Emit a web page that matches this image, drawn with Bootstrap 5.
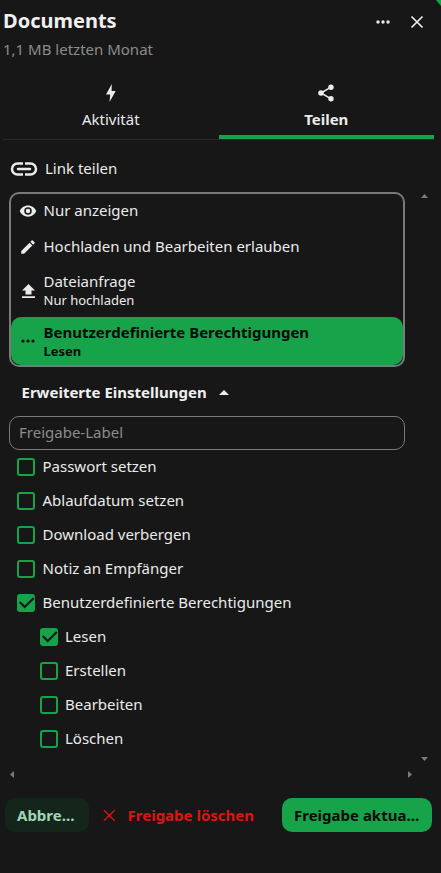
<!DOCTYPE html>
<html lang="de"><head><meta charset="utf-8">
<title>Documents</title>
<link rel="stylesheet" href="https://cdn.jsdelivr.net/npm/bootstrap@5.3.0/dist/css/bootstrap.min.css">
<style>
html,body{height:100%}
body{background:#171717;color:#ebebeb;font-family:"Noto Sans",sans-serif;font-size:15px;line-height:20px;position:relative;overflow:hidden}
.panel{width:441px;height:873px}
.topbar{height:38px;padding:3px 7px 0 3px}
.doc-title{font-size:20px;font-weight:700;line-height:30px;margin:0;color:#f0f0f0}
.top-btn{width:34px;height:34px;background:none;border:0;padding:0;color:#ebebeb}
.subline{font-size:15px;color:#8c8c8c;line-height:20px;padding:1px 3px 0;margin-top:0;height:21px}
.tabrow{margin:16px 7px 0 3px;height:65px;border-bottom:1px solid #292929}
.tabcell{flex:1 1 0;height:64px;text-align:center;padding-top:9px;color:#ebebeb}
.tabcell.on{font-weight:700;border-bottom:4px solid #16a34a}
.tabcell svg{display:block;margin:0 auto 7px}
.tabcell span{line-height:20px;display:block}
.linkline{height:52px;padding:6px 0 0 10px;gap:7px}
.lift{padding-bottom:2px}
.scrollwrap{height:576px}
.mainpane{width:414px;padding-left:9px}
.vbar{width:27px;padding:2px 0 1px 7px;height:570px}
.optbox{width:396px;height:175px;border:2px solid #7a7a7a;border-radius:10px;background:#171717;overflow:hidden}
.optrow{padding:0 8px;gap:6.5px;height:36px}
.optrow.first{height:35px}
.optrow.first .lift{padding-bottom:4px}
.optrow.first svg{margin-bottom:1px}
.optrow.two{height:52px;align-items:center}
.optrow.sel{background:#16a34a;color:#0a0a0a;font-weight:700;border-radius:10px;height:48px}
.opttext small{display:block;font-size:13px;line-height:18px}
.opttext{line-height:19px}
.iconcell{width:18px;flex:none;display:flex;justify-content:center}
.advhead{height:49px;padding:1px 0 0 12.500px;font-weight:700;gap:12px;color:#f0f0f0}
.labelinput{width:396px;height:34px;background:#171717;border:1px solid #7a7a7a;border-radius:10px;color:#ebebeb;padding:0 9px 2px;font-size:15px;display:block}
.labelinput::placeholder{color:#8c8c8c;opacity:1}
.labelinput:focus{background:#171717;color:#ebebeb;border-color:#7a7a7a;box-shadow:none}
.chk{height:34px;padding-left:8px;gap:7.500px;margin:0}
.chk.sub{padding-left:31px;gap:7px}
.boxmark{width:18px;height:18px;border:2px solid #16a34a;border-radius:3px;flex:none;display:flex;align-items:center;justify-content:center}
.boxmark.ticked{background:#16a34a}
.boxmark svg{margin:-2px;flex:none}
.hbar{padding:0 0 0 10px;width:412px;height:12px}
.footrow{padding:0 9px 0 5px;margin-top:18px;height:34px}
.btn-cancel,.btn-save,.btn-del{height:34px;border-radius:10px;font-size:15px;font-weight:700;border:0;padding:0;line-height:34px;white-space:nowrap;text-align:left}
.btn-cancel{width:84px;background:#14261b;color:#a2d5b5;padding-left:12px}
.btn-del{width:165px;background:none;color:#dc1414;padding-left:14px;gap:12px}
.btn-save{width:150px;background:#16a34a;color:#0a0a0a;margin-left:28px;padding-left:12px}
.btn-cancel:hover,.btn-cancel:active{background:#14261b;color:#a2d5b5}
.btn-save:hover{background:#16a34a;color:#0a0a0a}
.btn-del:hover{color:#dc1414}
.cornertick{position:absolute;right:0;top:0;width:5px;height:6px}
</style></head>
<body>
<svg class="cornertick" viewBox="0 0 5 6"><path d="M0 0h5v6z" fill="#16a34a"/></svg>
<div class="panel d-flex flex-column">
  <div class="topbar d-flex align-items-center justify-content-between">
    <h1 class="doc-title">Documents</h1>
    <div class="d-flex">
      <button class="top-btn" aria-label="Mehr"><svg width="14" height="4" viewBox="0 0 14 4"><circle cx="2" cy="2" r="1.700" fill="#ebebeb"/><circle cx="7" cy="2" r="1.700" fill="#ebebeb"/><circle cx="12" cy="2" r="1.700" fill="#ebebeb"/></svg></button>
      <button class="top-btn" aria-label="Schließen"><svg width="14" height="14" viewBox="0 0 14 14"><path d="M1.500 1.500l11 11M12.500 1.500l-11 11" stroke="#ebebeb" stroke-width="1.700" fill="none"/></svg></button>
    </div>
  </div>
  <div class="subline">1,1 MB letzten Monat</div>
  <div class="tabrow d-flex">
    <div class="tabcell"><svg width="10" height="18" viewBox="0 0 10 18"><path d="M5.800 0L0 10.600h4.200L3.500 18 9.700 7H5.600z" fill="#ebebeb"/></svg><span>Aktivität</span></div>
    <div class="tabcell on"><svg width="17" height="18" viewBox="0 0 17 18"><path d="M13 3.200L3 9l10 5.800" stroke="#ebebeb" stroke-width="1.500" fill="none"/><circle cx="13" cy="3.200" r="2.700" fill="#ebebeb"/><circle cx="3" cy="9" r="2.800" fill="#ebebeb"/><circle cx="13" cy="14.800" r="2.700" fill="#ebebeb"/></svg><span>Teilen</span></div>
  </div>
  <div class="linkline d-flex align-items-center"><svg width="28" height="14" viewBox="0 0 28 14"><path d="M13 1.500H7.500a5.500 5.500 0 0 0 0 11H13M15 1.500h5.500a5.500 5.500 0 0 1 0 11H15" stroke="#ebebeb" stroke-width="2.500" fill="none"/><path d="M8 7h12" stroke="#ebebeb" stroke-width="2.500" stroke-linecap="round"/></svg><span class="lift">Link teilen</span></div>
  <div class="d-flex scrollwrap">
    <div class="mainpane">
      <div class="optbox d-flex flex-column">
        <div class="optrow first d-flex align-items-center"><span class="iconcell"><svg width="20" height="20" viewBox="0 0 24 24"><path d="M12 4.500C7 4.500 2.700 7.600 1 12c1.700 4.400 6 7.500 11 7.500s9.300-3.100 11-7.500c-1.700-4.400-6-7.500-11-7.500zM12 17a5 5 0 1 1 0-10 5 5 0 0 1 0 10zm0-8a3 3 0 1 0 0 6 3 3 0 0 0 0-6z" fill="#ebebeb"/></svg></span><span class="lift">Nur anzeigen</span></div>
        <div class="optrow d-flex align-items-center"><span class="iconcell"><svg width="20" height="20" viewBox="0 0 24 24"><path d="M3 17.250V21h3.750L17.810 9.940l-3.750-3.750zM20.710 7.040a1 1 0 0 0 0-1.410l-2.340-2.340a1 1 0 0 0-1.410 0l-1.830 1.830 3.750 3.750z" fill="#ebebeb"/></svg></span><span class="lift">Hochladen und Bearbeiten erlauben</span></div>
        <div class="optrow two d-flex"><span class="iconcell"><svg width="13" height="14" viewBox="0 0 13 14"><path d="M6.500 0L13 6.500H9.500v4h-6v-4H0zM0 12.200h13V14H0z" fill="#ebebeb"/></svg></span><span class="opttext lift">Dateianfrage<small>Nur hochladen</small></span></div>
        <div class="optrow sel d-flex align-items-center"><span class="iconcell"><svg width="14" height="4" viewBox="0 0 14 4"><circle cx="2" cy="2" r="1.600" fill="#0a0a0a"/><circle cx="7" cy="2" r="1.600" fill="#0a0a0a"/><circle cx="12" cy="2" r="1.600" fill="#0a0a0a"/></svg></span><span class="opttext">Benutzerdefinierte Berechtigungen<small>Lesen</small></span></div>
      </div>
      <div class="advhead d-flex align-items-center"><span>Erweiterte Einstellungen</span><svg width="10" height="5" viewBox="0 0 10 5"><path d="M0 5L5 0l5 5z" fill="#ebebeb"/></svg></div>
      <input class="form-control labelinput" type="text" placeholder="Freigabe-Label">
      <div>
        <div class="chk d-flex align-items-center"><span class="boxmark"></span><span class="lift">Passwort setzen</span></div>
        <div class="chk d-flex align-items-center"><span class="boxmark"></span><span class="lift">Ablaufdatum setzen</span></div>
        <div class="chk d-flex align-items-center"><span class="boxmark"></span><span class="lift">Download verbergen</span></div>
        <div class="chk d-flex align-items-center"><span class="boxmark"></span><span class="lift">Notiz an Empfänger</span></div>
        <div class="chk d-flex align-items-center"><span class="boxmark ticked"><svg width="18" height="18" viewBox="0 0 18 18"><path d="M2.700 8l5 5L16.800 4" stroke="#171717" stroke-width="2.200" fill="none"/></svg></span><span class="lift">Benutzerdefinierte Berechtigungen</span></div>
        <div class="chk sub d-flex align-items-center"><span class="boxmark ticked"><svg width="18" height="18" viewBox="0 0 18 18"><path d="M2.700 8l5 5L16.800 4" stroke="#171717" stroke-width="2.200" fill="none"/></svg></span><span class="lift">Lesen</span></div>
        <div class="chk sub d-flex align-items-center"><span class="boxmark"></span><span class="lift">Erstellen</span></div>
        <div class="chk sub d-flex align-items-center"><span class="boxmark"></span><span class="lift">Bearbeiten</span></div>
        <div class="chk sub d-flex align-items-center"><span class="boxmark"></span><span class="lift">Löschen</span></div>
      </div>
    </div>
    <div class="vbar d-flex flex-column justify-content-between"><svg width="7" height="4" viewBox="0 0 7 4"><path d="M0 4l3.500-4L7 4z" fill="#7a7a7a"/></svg><svg width="7" height="4" viewBox="0 0 7 4"><path d="M0 0l3.500 4L7 0z" fill="#7a7a7a"/></svg></div>
  </div>
  <div class="hbar d-flex align-items-center justify-content-between"><svg width="4" height="7" viewBox="0 0 4 7"><path d="M4 0L0 3.500 4 7z" fill="#7a7a7a"/></svg><svg width="4" height="7" viewBox="0 0 4 7"><path d="M0 0l4 3.500L0 7z" fill="#7a7a7a"/></svg></div>
  <div class="footrow d-flex align-items-center">
    <button class="btn btn-cancel">Abbre…</button>
    <button class="btn btn-del d-flex align-items-center"><svg width="13" height="13" viewBox="0 0 13 13"><path d="M1 1l11 11M12 1L1 12" stroke="#dc1414" stroke-width="1.500" fill="none"/></svg><span>Freigabe löschen</span></button>
    <button class="btn btn-save">Freigabe aktua…</button>
  </div>
</div>
<script src="https://cdn.jsdelivr.net/npm/bootstrap@5.3.0/dist/js/bootstrap.bundle.min.js"></script>
</body></html>
